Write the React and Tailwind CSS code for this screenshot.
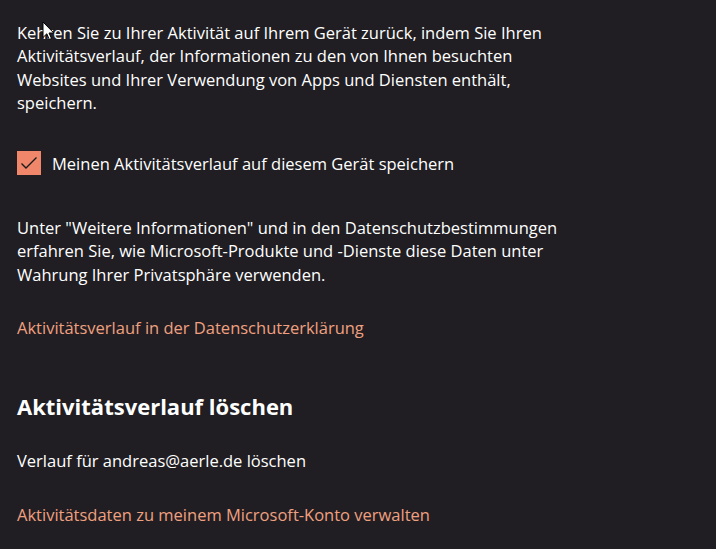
export default function App() {
  return (
    <div
      className="relative w-[716px] h-[549px] overflow-hidden bg-[#201e22] text-[#ffffff] pl-[17px] pt-[21px]"
      style={{ fontFamily: '"Open Sans", "Noto Sans", sans-serif' }}
    >
      <p className="text-[16.5px] leading-[23.3px] w-[600px] whitespace-nowrap">
        Kehren Sie zu Ihrer Aktivität auf Ihrem Gerät zurück, indem Sie Ihren
        <br />
        Aktivitätsverlauf, der Informationen zu den von Ihnen besuchten
        <br />
        Websites und Ihrer Verwendung von Apps und Diensten enthält,
        <br />
        speichern.
      </p>

      <div className="flex items-center gap-[11px] mt-[37px] h-[24px]">
        <div className="w-[24px] h-[24px] bg-[#f0866a] flex items-center justify-center">
          <svg width="18" height="14" viewBox="0 0 18 14" fill="none">
            <path d="M1.5 7.5 L6 12 L16.5 1.5" stroke="#1a1a1a" strokeWidth="1.4" />
          </svg>
        </div>
        <span className="text-[16.5px] leading-[23px] whitespace-nowrap">
          Meinen Aktivitätsverlauf auf diesem Gerät speichern
        </span>
      </div>

      <p className="text-[16.5px] leading-[23.3px] mt-[41px] whitespace-nowrap">
        Unter "Weitere Informationen" und in den Datenschutzbestimmungen
        <br />
        erfahren Sie, wie Microsoft-Produkte und -Dienste diese Daten unter
        <br />
        Wahrung Ihrer Privatsphäre verwenden.
      </p>

      <p className="text-[16.5px] leading-[23px] mt-[30px] text-[#f0a080]">
        Aktivitätsverlauf in der Datenschutzerklärung
      </p>

      <h2 className="text-[22px] leading-[30px] font-bold mt-[52px]">
        Aktivitätsverlauf löschen
      </h2>

      <p className="text-[16.5px] leading-[23px] mt-[28px]">
        Verlauf für andreas@aerle.de löschen
      </p>

      <p className="text-[16.5px] leading-[23px] mt-[31px] text-[#f0a080]">
        Aktivitätsdaten zu meinem Microsoft-Konto verwalten
      </p>

      <svg
        className="absolute left-[42px] top-[21px]"
        width="13"
        height="20"
        viewBox="0 0 13 20"
      >
        <path
          d="M1 1 L1 16.5 L4.8 12.8 L7.3 18.5 L9.5 17.5 L7 12 L11.8 12 Z"
          fill="#ffffff"
          stroke="#000000"
          strokeWidth="1"
          strokeLinejoin="round"
        />
      </svg>
    </div>
  );
}
